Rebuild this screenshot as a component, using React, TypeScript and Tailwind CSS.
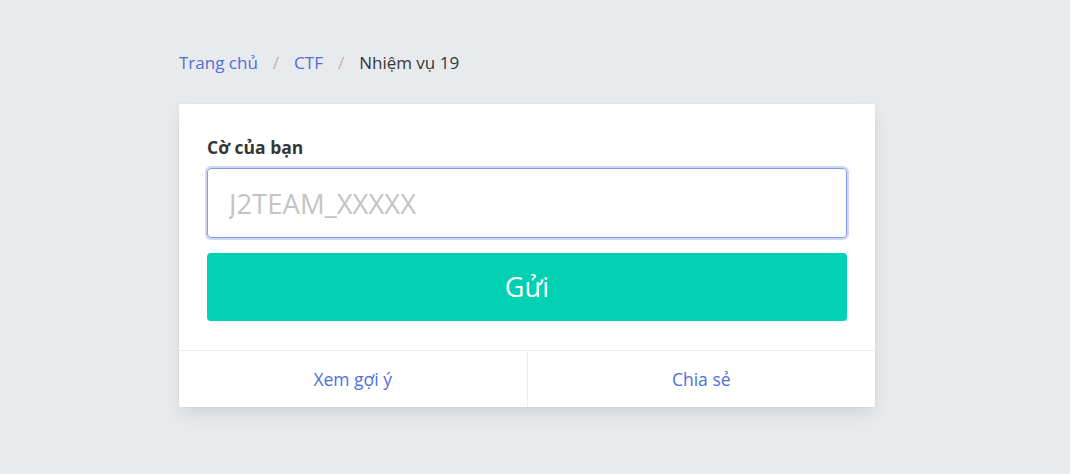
const linkColor = "text-[#4f6fdc]";

export default function App() {
  return (
    <div
      className="min-h-[474px] bg-[#e9eaee] text-[#363636]"
      style={{ fontFamily: '"Open Sans", "Noto Sans", "DejaVu Sans", sans-serif' }}
    >
      <div className="ml-[179px] w-[696px] pt-[50px]">
        <nav className="flex items-center text-[17px] leading-[26px]">
          <a href="#" className={linkColor}>Trang chủ</a>
          <span className="px-[15px] text-[#b5b5b5]">/</span>
          <a href="#" className={linkColor}>CTF</a>
          <span className="px-[15px] text-[#b5b5b5]">/</span>
          <span className="text-[#363636]">Nhiệm vụ 19</span>
        </nav>

        <div className="mt-[28px] bg-white shadow-[0_8px_16px_-2px_rgba(10,10,10,0.1),0_0_0_1px_rgba(10,10,10,0.02)]">
          <div className="px-[28px] pt-[31px] pb-[29px]">
            <label className="block text-[17.5px] font-bold leading-6 text-[#363636]">Cờ của bạn</label>
            <input
              type="text"
              placeholder="J2TEAM_XXXXX"
              className="mt-[9px] block h-[70px] w-full rounded-[4px] border border-[#7f9cf0] px-[21px] text-[27.5px] text-[#363636] shadow-[0_0_0_2px_rgba(72,95,199,0.25)] outline-none placeholder:text-[#c4c4c4]"
            />
            <button className="mt-[15px] flex h-[68px] w-full items-center justify-center rounded-[4px] bg-[#00d1b2] text-[27px] text-white">
              Gửi
            </button>
          </div>
          <div className="flex border-t border-[#ededed]">
            <a href="#" className={`flex h-[56px] flex-1 items-center justify-center text-[17.5px] ${linkColor}`}>
              Xem gợi ý
            </a>
            <a href="#" className={`flex h-[56px] flex-1 items-center justify-center border-l border-[#ededed] text-[17.5px] ${linkColor}`}>
              Chia sẻ
            </a>
          </div>
        </div>
      </div>
    </div>
  );
}
